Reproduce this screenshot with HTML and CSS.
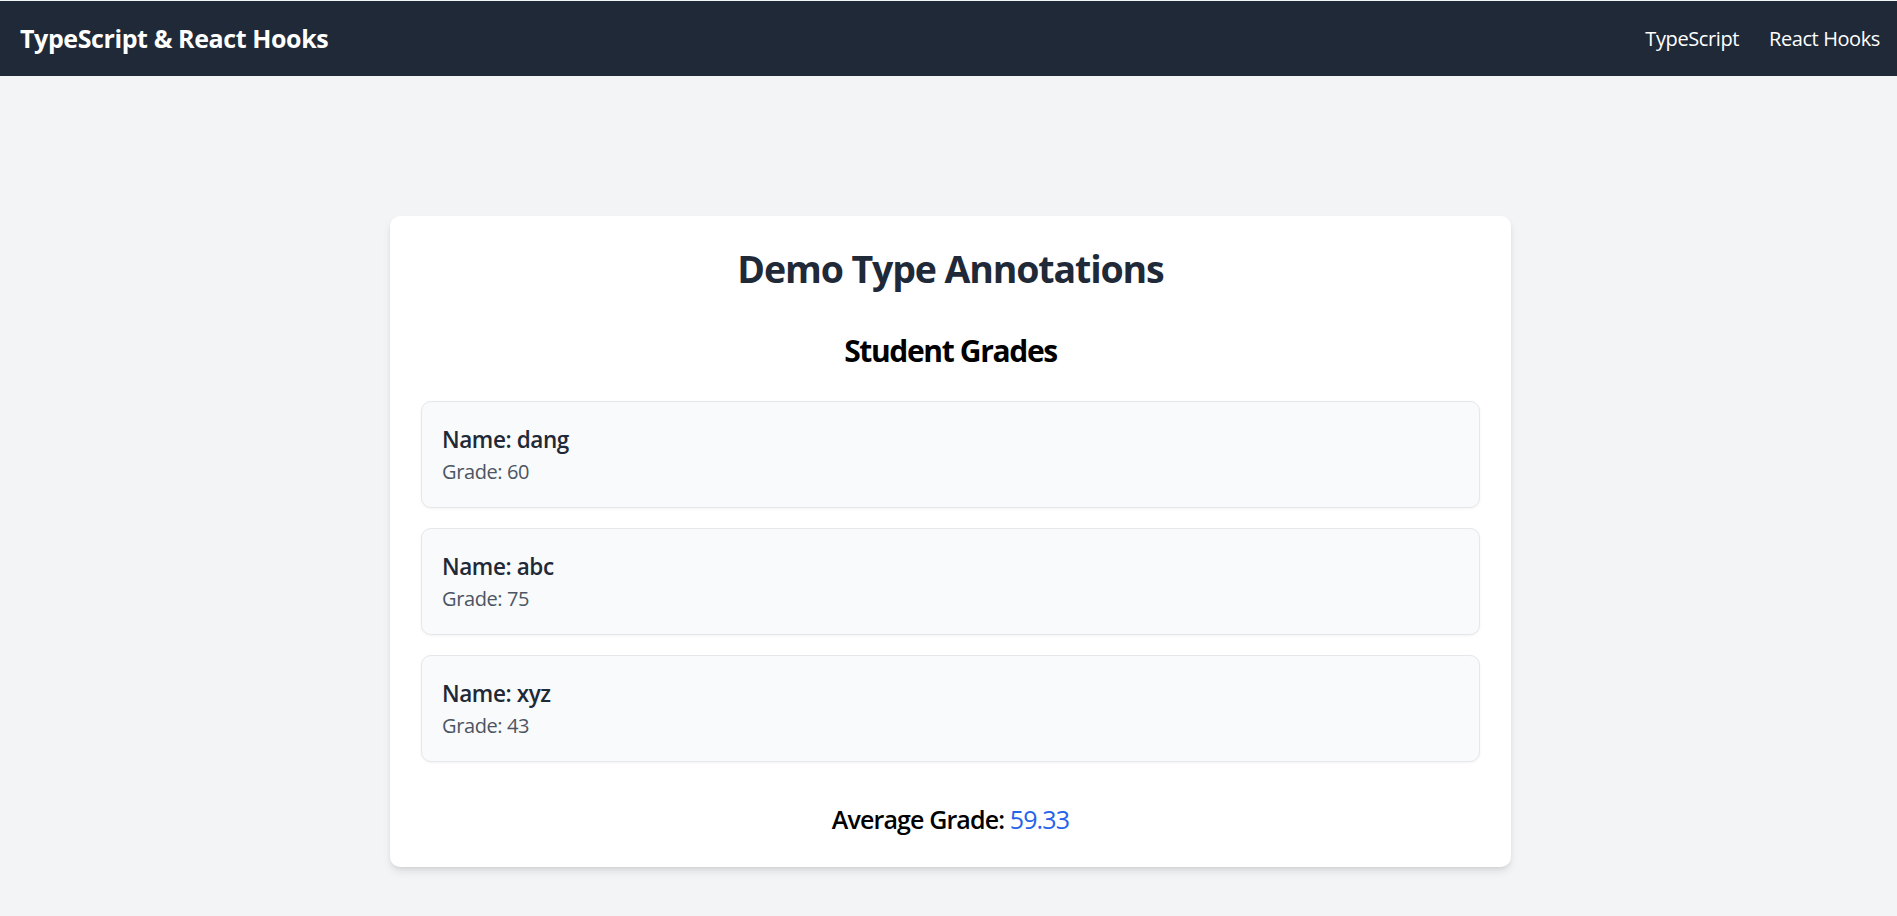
FILE: index.html
```html
<!DOCTYPE html>
<html lang="en">
<head>
<meta charset="utf-8">
<title>TypeScript &amp; React Hooks</title>
<link rel="stylesheet" href="styles.css">
</head>
<body>
  <nav class="navbar">
    <div class="brand">TypeScript &amp; React Hooks</div>
    <div class="nav-links">
      <a class="nav-link" href="#">TypeScript</a>
      <a class="nav-link" href="#">React Hooks</a>
    </div>
  </nav>
  <main class="page">
    <section class="card">
      <h1 class="title">Demo Type Annotations</h1>
      <h2 class="subtitle">Student Grades</h2>
      <ul class="student-list">
        <li class="student">
          <div class="student-name">Name: dang</div>
          <div class="student-grade">Grade: 60</div>
        </li>
        <li class="student">
          <div class="student-name">Name: abc</div>
          <div class="student-grade">Grade: 75</div>
        </li>
        <li class="student">
          <div class="student-name">Name: xyz</div>
          <div class="student-grade">Grade: 43</div>
        </li>
      </ul>
      <p class="average">Average Grade: <span class="average-value">59.33</span></p>
    </section>
  </main>
</body>
</html>
```

FILE: styles.css
```css
* { box-sizing: border-box; }
html, body { margin: 0; padding: 0; }
body {
  background: #f3f4f6;
  font-family: "Open Sans", "Noto Sans", sans-serif;
  letter-spacing: -0.025em;
  color: #111827;
  padding-top: 1px;
  min-height: 916px;
}
.navbar {
  height: 75px;
  background: #1f2937;
  display: flex;
  align-items: center;
  justify-content: space-between;
  padding: 0 17px 0 20px;
}
.brand {
  color: #ffffff;
  font-size: 25px;
  font-weight: 700;
  line-height: 35px;
}
.nav-links {
  display: flex;
  gap: 30px;
}
.nav-link {
  color: #ffffff;
  text-decoration: none;
  font-size: 20px;
  line-height: 30px;
}
.page {
  display: flex;
  justify-content: center;
  padding: 140px 0 0 4px;
}
.card {
  width: 1121px;
  background: #ffffff;
  border-radius: 10px;
  box-shadow: 0 5px 8px -1px rgba(0,0,0,0.1), 0 2px 5px -2px rgba(0,0,0,0.1);
  padding: 30px 31px;
}
.title {
  margin: 0 0 40px;
  text-align: center;
  font-size: 37.5px;
  line-height: 45px;
  font-weight: 700;
  color: #1f2937;
  letter-spacing: -0.03em;
}
.subtitle {
  margin: 0 0 30px;
  text-align: center;
  font-size: 30px;
  line-height: 40px;
  font-weight: 700;
  color: #000000;
  letter-spacing: -0.045em;
}
.student-list {
  list-style: none;
  margin: 0;
  padding: 0;
  display: flex;
  flex-direction: column;
  gap: 20px;
}
.student {
  background: #f9fafb;
  border: 1px solid #e5e7eb;
  border-radius: 10px;
  box-shadow: 0 1px 3px rgba(0,0,0,0.05);
  padding: 20px;
}
.student-name {
  font-size: 22.5px;
  line-height: 35px;
  font-weight: 600;
  color: #1f2937;
}
.student-grade {
  font-size: 20px;
  line-height: 30px;
  color: #4b5563;
}
.average {
  margin: 40px 0 0;
  text-align: center;
  font-size: 25px;
  line-height: 35px;
  font-weight: 600;
  color: #000000;
  letter-spacing: -0.035em;
}
.average-value {
  color: #2563eb;
  font-weight: 400;
}
```
